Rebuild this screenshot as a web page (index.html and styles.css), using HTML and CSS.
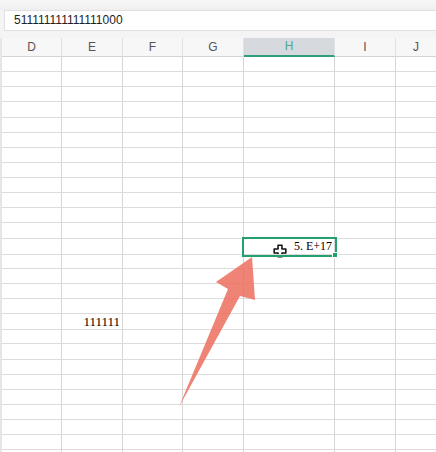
FILE: index.html
```html
<!DOCTYPE html>
<html lang="en">
<head>
<meta charset="UTF-8">
<title>Sheet</title>
<link rel="stylesheet" href="styles.css">
</head>
<body>

<div class="toolbar"></div>
<div class="formula-bar">
  <div class="formula-input">511111111111111000</div>
</div>

<div class="sheet">
  <div class="row header-row">
    <div class="col-head">D</div>
    <div class="col-head">E</div>
    <div class="col-head">F</div>
    <div class="col-head">G</div>
    <div class="col-head active">H</div>
    <div class="col-head">I</div>
    <div class="col-head last">J</div>
  </div>
  <div id="rows"></div>
</div>

<svg class="cursor" width="14" height="14" viewBox="0 0 18 18">
  <path d="M6.5 1.5h5v5h5v5h-5v5h-5v-5h-5v-5h5z" fill="#fff" stroke="#111" stroke-width="2" stroke-linejoin="round"/>
</svg>

<svg class="arrow" width="436" height="452" viewBox="0 0 436 452">
  <polygon points="179,407 228,289 216,282 252,257 255,300 240,296" fill="#ec6e5e" fill-opacity="0.85"/>
</svg>

<script>
  // build the grid rows, put values into a couple of cells
  var rows = document.getElementById('rows');
  var values = { '12-4': '5. E+17', '17-1': '111111' };

  for (var r = 0; r < 27; r++) {
    var row = document.createElement('div');
    row.className = 'row';
    for (var c = 0; c < 7; c++) {
      var cell = document.createElement('div');
      cell.className = 'cell';
      if (c == 6) cell.className += ' last';
      var v = values[r + '-' + c];
      if (v) cell.textContent = v;
      if (r == 12 && c == 4) {
        cell.className += ' selected';
        var handle = document.createElement('span');
        handle.className = 'fill-handle';
        cell.appendChild(handle);
      }
      row.appendChild(cell);
    }
    rows.appendChild(row);
  }
</script>

</body>
</html>
```

FILE: styles.css
```css
body {
  margin: 0;
  width: 436px;
  height: 452px;
  overflow: hidden;
  background: #fff;
  font-family: "Liberation Sans", Arial, sans-serif;
  position: relative;
}
.toolbar {
  height: 10px;
  background: linear-gradient(#f7f7f7, #efefef);
}
.formula-bar {
  background: #f4f4f4;
  padding: 0 0 7px 4px;
}
.formula-input {
  height: 19px;
  background: #fff;
  border: 1px solid #e0e0e0;
  border-right: none;
  padding-left: 9px;
  font-size: 12px;
  line-height: 19px;
  color: #222;
}
.sheet {
  border-left: 2px solid #e6e6e6;
}
.row {
  display: grid;
  grid-template-columns: 60px 61px 60px 61px 91px 61px 1fr;
  height: 15.13px;
}
.header-row {
  height: 19px;
  background: #f7f7f7;
}
.col-head {
  border-right: 1px solid #e2e2e2;
  border-bottom: 1px solid #d4d4d4;
  text-align: center;
  font-size: 12px;
  line-height: 18px;
  color: #555;
}
.col-head.active {
  background: #d6d9dd;
  color: #4fa88a;
  border-bottom: 2px solid #2f9e79;
  line-height: 17px;
}
.col-head.last {
  border-right: none;
}
.cell {
  position: relative;
  border-right: 1px solid #d6d6d6;
  border-bottom: 1px solid #dcdcdc;
  font-family: "Liberation Serif", "Times New Roman", serif;
  font-size: 13px;
  line-height: 15px;
  text-align: right;
  padding-right: 2px;
  color: #000;
  white-space: nowrap;
}
.cell.last {
  border-right: none;
}
.cell.selected {
  outline: 2px solid #22a06e;
  outline-offset: 0;
  z-index: 1;
  font-size: 12px;
}
.fill-handle {
  position: absolute;
  right: -4px;
  bottom: -4px;
  width: 4px;
  height: 4px;
  background: #22a06e;
  border: 1px solid #fff;
}
.cursor {
  position: absolute;
  left: 273px;
  top: 244px;
}
.arrow {
  position: absolute;
  left: 0;
  top: 0;
  pointer-events: none;
}
```
